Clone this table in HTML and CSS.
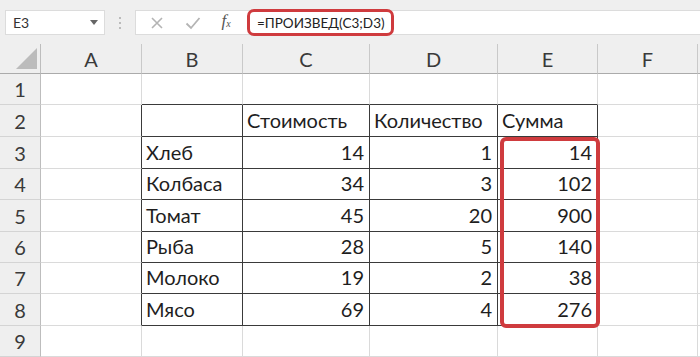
FILE: index.html
```html
<!DOCTYPE html>
<html lang="ru">
<head>
    <meta charset="UTF-8">
    <meta name="viewport" content="width=device-width, initial-scale=1.0">
    <title>Книга1 - Excel</title>
    <link rel="stylesheet" href="styles.css">
</head>
<body>
    <div class="toolbar">
        <div class="namebox">
            <span>E3</span>
            <svg class="caret" width="8" height="5" viewBox="0 0 8 5"><path d="M0 0h8L4 5z" fill="#666"/></svg>
        </div>
        <div class="grip">
            <svg width="4" height="14" viewBox="0 0 4 14">
                <circle cx="2" cy="2" r="1" fill="#aaa"/>
                <circle cx="2" cy="7" r="1" fill="#aaa"/>
                <circle cx="2" cy="12" r="1" fill="#aaa"/>
            </svg>
        </div>
        <div class="formula-bar">
            <div class="fx-buttons">
                <svg width="14" height="14" viewBox="0 0 14 14"><path d="M2 2l10 10M12 2L2 12" stroke="#b4b4b4" stroke-width="1.6"/></svg>
                <svg width="16" height="14" viewBox="0 0 16 14"><path d="M1.5 7.5l4.5 4.5L14.5 2" stroke="#b4b4b4" stroke-width="1.8" fill="none"/></svg>
                <span class="fx">f<sub>x</sub></span>
            </div>
            <div class="formula-input">
                <span class="formula-text">=ПРОИЗВЕД(C3;D3)</span>
            </div>
        </div>
    </div>

    <div class="sheet">
        <!-- заголовки столбцов -->
        <div class="corner"><svg width="21" height="21" viewBox="0 0 21 21"><path d="M21 0V21H0z" fill="#bcbcbc"/></svg></div>
        <div class="col-head">A</div>
        <div class="col-head">B</div>
        <div class="col-head">C</div>
        <div class="col-head">D</div>
        <div class="col-head">E</div>
        <div class="col-head">F</div>
        <div class="col-head rest"></div>

        <!-- 1 -->
        <div class="row-head">1</div>
        <div class="cell"></div>
        <div class="cell edge-b"></div>
        <div class="cell edge-b"></div>
        <div class="cell edge-b"></div>
        <div class="cell edge-b"></div>
        <div class="cell"></div>
        <div class="cell rest"></div>

        <!-- 2 -->
        <div class="row-head">2</div>
        <div class="cell edge-r"></div>
        <div class="cell box"></div>
        <div class="cell box">Стоимость</div>
        <div class="cell box">Количество</div>
        <div class="cell box">Сумма</div>
        <div class="cell"></div>
        <div class="cell rest"></div>

        <!-- 3 -->
        <div class="row-head">3</div>
        <div class="cell edge-r"></div>
        <div class="cell box">Хлеб</div>
        <div class="cell box num">14</div>
        <div class="cell box num">1</div>
        <div class="cell box num">14</div>
        <div class="cell"></div>
        <div class="cell rest"></div>

        <!-- 4 -->
        <div class="row-head">4</div>
        <div class="cell edge-r"></div>
        <div class="cell box">Колбаса</div>
        <div class="cell box num">34</div>
        <div class="cell box num">3</div>
        <div class="cell box num">102</div>
        <div class="cell"></div>
        <div class="cell rest"></div>

        <!-- 5 -->
        <div class="row-head">5</div>
        <div class="cell edge-r"></div>
        <div class="cell box">Томат</div>
        <div class="cell box num">45</div>
        <div class="cell box num">20</div>
        <div class="cell box num">900</div>
        <div class="cell"></div>
        <div class="cell rest"></div>

        <!-- 6 -->
        <div class="row-head">6</div>
        <div class="cell edge-r"></div>
        <div class="cell box">Рыба</div>
        <div class="cell box num">28</div>
        <div class="cell box num">5</div>
        <div class="cell box num">140</div>
        <div class="cell"></div>
        <div class="cell rest"></div>

        <!-- 7 -->
        <div class="row-head">7</div>
        <div class="cell edge-r"></div>
        <div class="cell box">Молоко</div>
        <div class="cell box num">19</div>
        <div class="cell box num">2</div>
        <div class="cell box num">38</div>
        <div class="cell"></div>
        <div class="cell rest"></div>

        <!-- 8 -->
        <div class="row-head">8</div>
        <div class="cell edge-r"></div>
        <div class="cell box">Мясо</div>
        <div class="cell box num">69</div>
        <div class="cell box num">4</div>
        <div class="cell box num">276</div>
        <div class="cell"></div>
        <div class="cell rest"></div>

        <!-- 9 -->
        <div class="row-head">9</div>
        <div class="cell"></div>
        <div class="cell"></div>
        <div class="cell"></div>
        <div class="cell"></div>
        <div class="cell"></div>
        <div class="cell"></div>
        <div class="cell rest"></div>

        <!-- выделение E3:E8 поверх ячеек -->
        <div class="mark"></div>
    </div>
</body>
</html>
```

FILE: styles.css
```css
* {
    box-sizing: border-box;
}
body {
    margin: 0;
    font-family: Lato, 'Open Sans', sans-serif;
    color: #1e1e1e;
    background-color: #fff;
    width: 700px;
    height: 357px;
    overflow: hidden;
}
.toolbar {
    height: 44px;
    background-color: #efefef;
    display: flex;
    align-items: flex-start;
    padding-top: 10px;
}
.namebox {
    margin-left: 5px;
    width: 100px;
    height: 25px;
    background-color: #fff;
    border: 1px solid #dcdcdc;
    display: flex;
    align-items: center;
    justify-content: space-between;
    padding: 0 6px 0 7px;
    font-size: 14px;
    color: #333;
}
.grip {
    width: 30px;
    height: 25px;
    display: flex;
    align-items: center;
    justify-content: center;
}
.formula-bar {
    flex: 1;
    height: 25px;
    background-color: #fff;
    border: 1px solid #dcdcdc;
    border-right: none;
    display: flex;
}
.fx-buttons {
    width: 111px;
    display: flex;
    align-items: center;
    justify-content: space-around;
    padding: 0 6px 0 4px;
}
.fx {
    font-family: 'Liberation Serif', serif;
    font-style: italic;
    font-size: 17px;
    color: #555;
    margin-top: -3px;
}
.fx sub {
    font-size: 10px;
    vertical-align: -1px;
}
.formula-input {
    flex: 1;
    display: flex;
    align-items: stretch;
    margin: -2px 0;
}
.formula-text {
    display: flex;
    align-items: center;
    border: 3px solid #cf3b3e;
    border-radius: 7px;
    padding: 0 6px 0 7px;
    font-size: 13.5px;
    color: #222;
}

/* сетка листа */
.sheet {
    position: relative;
    display: grid;
    grid-template-columns: 41px 101px 101px 127px 128px 100px 100px 1fr;
    grid-template-rows: 30px 31px 32px 32px 31px 32px 31px 31px 32px 31px;
}
.corner {
    background-color: #efefef;
    border-right: 1px solid #bdbdbd;
    border-bottom: 1px solid #ababab;
    display: flex;
    align-items: flex-end;
    justify-content: flex-end;
    padding: 0 3px 4px 0;
}
.col-head {
    background-color: #efefef;
    border-right: 1px solid #c9c9c9;
    border-bottom: 1px solid #ababab;
    display: flex;
    align-items: center;
    justify-content: center;
    font-size: 20px;
    color: #3a3a3a;
    padding-top: 1px;
}
.col-head.rest {
    border-right: none;
}
.row-head {
    background-color: #efefef;
    border-right: 1px solid #bdbdbd;
    border-bottom: 1px solid #d4d4d4;
    display: flex;
    align-items: center;
    justify-content: center;
    font-size: 20px;
    color: #3a3a3a;
}
.cell {
    border-right: 1px solid #dadada;
    border-bottom: 1px solid #dadada;
    display: flex;
    align-items: flex-end;
    padding: 0 4px 4px 4px;
    font-size: 20px;
    line-height: 24px;
    white-space: nowrap;
}
.cell.rest {
    border-right: none;
}
.cell.num {
    justify-content: flex-end;
    padding-right: 5px;
}
.edge-r {
    border-right-color: #3a3a3a;
}
.edge-b {
    border-bottom-color: #3a3a3a;
}
.box {
    border-right-color: #3a3a3a;
    border-bottom-color: #3a3a3a;
}
.mark {
    position: absolute;
    left: 500px;
    top: 93px;
    width: 100px;
    height: 191px;
    border: 4px solid #cf3b3e;
    border-radius: 6px;
    pointer-events: none;
}
```
